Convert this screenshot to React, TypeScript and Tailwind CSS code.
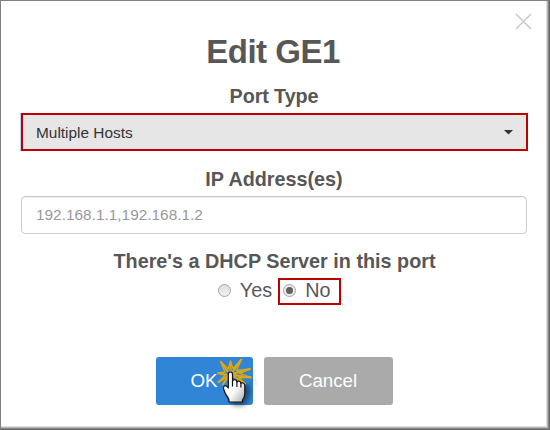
import React from 'react';

const ClickPointer: React.FC = () => (
  <svg
    className="absolute left-[60px] top-0 h-[58px] w-[50px]"
    viewBox="0 0 50 58"
    fill="none"
  >
    <defs>
      <linearGradient id="hand" x1="0" y1="0" x2="1" y2="1">
        <stop offset="0.55" stopColor="#ffffff" />
        <stop offset="1" stopColor="#a8a8a8" />
      </linearGradient>
      <filter id="soft" x="-50%" y="-50%" width="200%" height="200%">
        <feGaussianBlur stdDeviation="2" />
      </filter>
    </defs>
    <path
      d="M18 21l7 6 8 0 2 6-2 9-5 7H17l-4-9z"
      fill="#000"
      opacity="0.4"
      filter="url(#soft)"
    />
    <path d="M36 22l4 5" stroke="#000" strokeWidth="3" opacity="0.15" filter="url(#soft)" />
    <path
      d="M4.500 4.200L12 15M14.500 4.500V15M25.700 2L16.500 15M34.500 11.800L16 17M35.500 20.500L17 18M29.500 27L17 19M1.500 16l10 2M1.800 25.500L12 19M6.500 28L12 20"
      stroke="#dda814"
      strokeWidth="2"
    />
    <path
      d="M11 20L2 25.500 9 18.500 1.500 16l7.500-1L4.500 4.200 12 12l2.500-7.500L17 11.500 25.700 2 20.500 13.500 34.500 11.800 24 16.500 35.500 20.500 23 20.500 29.500 27 20 23"
      stroke="#dda814"
      strokeWidth="1.300"
    />
    <path
      d="M12.300 31V17.200q0-2.200 2.100-2.200t2.100 2.200V24q.8-1.500 2.300-1.300 1.900.1 2.100 2.300.8-1.200 2.200-.8 1.600.3 1.800 2.300.8-1 2.200-.5 1.700.6 1.700 2.500V37q-.3 3.500-2.300 6v2H13v-2q-1-3-3.500-6L7.600 32q-.5-3 1.400-3.300 1.500-.1 3.300 2.300z"
      fill="url(#hand)"
      stroke="#111"
      strokeWidth="1.200"
      strokeLinejoin="round"
    />
    <path d="M16.500 24v5.500M20.900 25v5M24.900 26.500v4" stroke="#111" strokeWidth="1.200" />
  </svg>
);

const App: React.FC = () => {
  return (
    <div className="h-[430px] w-[550px] border-b border-l border-r border-t border-[#808080] border-b-[#696969] border-r-[#696969] bg-white font-['Liberation_Sans',Arial,sans-serif] text-[#575757]">
      <div className="h-full border-b border-r border-[#858585]">
        <div className="h-full border-b border-r border-[#b8b8b8]">
          <div className="relative flex h-full flex-col items-center border-b border-r border-[#dcdcdc] pl-5 pr-[19px]">
            <button className="absolute right-[14px] top-[12px]" aria-label="Close">
              <svg className="h-[17px] w-[17px]" viewBox="0 0 17 17">
                <path d="M1 1l15 15M16 1L1 16" stroke="#c8c8c8" strokeWidth="1.5" />
              </svg>
            </button>

            <h2 className="mt-[31px] h-10 pr-[2px] text-[33px] font-bold leading-10 tracking-[-0.5px]">
              Edit GE1
            </h2>

            <label className="mt-3 h-6 text-[19.8px] font-bold leading-6 tracking-[-0.1px]">Port Type</label>
            <div className="mt-[5px] flex h-[38px] w-[507px] items-center justify-between self-start border-2 border-[#c00000] bg-[#e6e6e6] pl-[13px] pr-[13px] text-[15.4px] text-[#333] shadow-[-1px_0_0_#b5d3f5]">
              <span className="pt-0.5">Multiple Hosts</span>
              <svg className="h-[5px] w-[9px]" viewBox="0 0 9 5">
                <path d="M0 0h9L4.500 4.500z" fill="#333" />
              </svg>
            </div>

            <label className="mt-4 h-6 text-[19.8px] font-bold leading-6">IP Address(es)</label>
            <input
              className="mt-[5px] h-[38px] w-full rounded-[4px] border border-[#ccc] px-[14px] text-[15.4px] shadow-[inset_0_1px_1px_rgba(0,0,0,0.075)] placeholder:text-[#999]"
              placeholder="192.168.1.1,192.168.1.2"
            />

            <p className="mt-[15px] h-6 pl-px text-[19.8px] font-bold leading-6">
              There's a DHCP Server in this port
            </p>
            <div className="mt-[5px] flex h-[27px] items-center pl-[11px] text-[19.8px] leading-6">
              <div className="flex items-center pb-[3px]">
                <span className="mr-[9px] h-[13px] w-[13px] rounded-full border border-[#a6a6a6] bg-linear-to-b from-[#dedede] to-[#f0f0f0]" />
                <span>Yes</span>
              </div>
              <div className="ml-[6px] flex h-[27px] w-[63px] items-center border-2 border-[#c00000] pb-[3px] pl-[3px]">
                <span className="mr-[9px] flex h-[13px] w-[13px] items-center justify-center rounded-full border border-[#a6a6a6] bg-[#ececec]">
                  <span className="h-[7px] w-[7px] rounded-full bg-[#606060]" />
                </span>
                <span>No</span>
              </div>
            </div>

            <div className="mt-[52px] flex gap-[11px] text-[18.7px] text-white">
              <button className="relative h-12 w-[97px] rounded-[3px] bg-[#3085d6]">
                OK
                <ClickPointer />
              </button>
              <button className="h-12 w-[129px] rounded-[3px] bg-[#aaa]">Cancel</button>
            </div>
          </div>
        </div>
      </div>
    </div>
  );
};

export default App;
